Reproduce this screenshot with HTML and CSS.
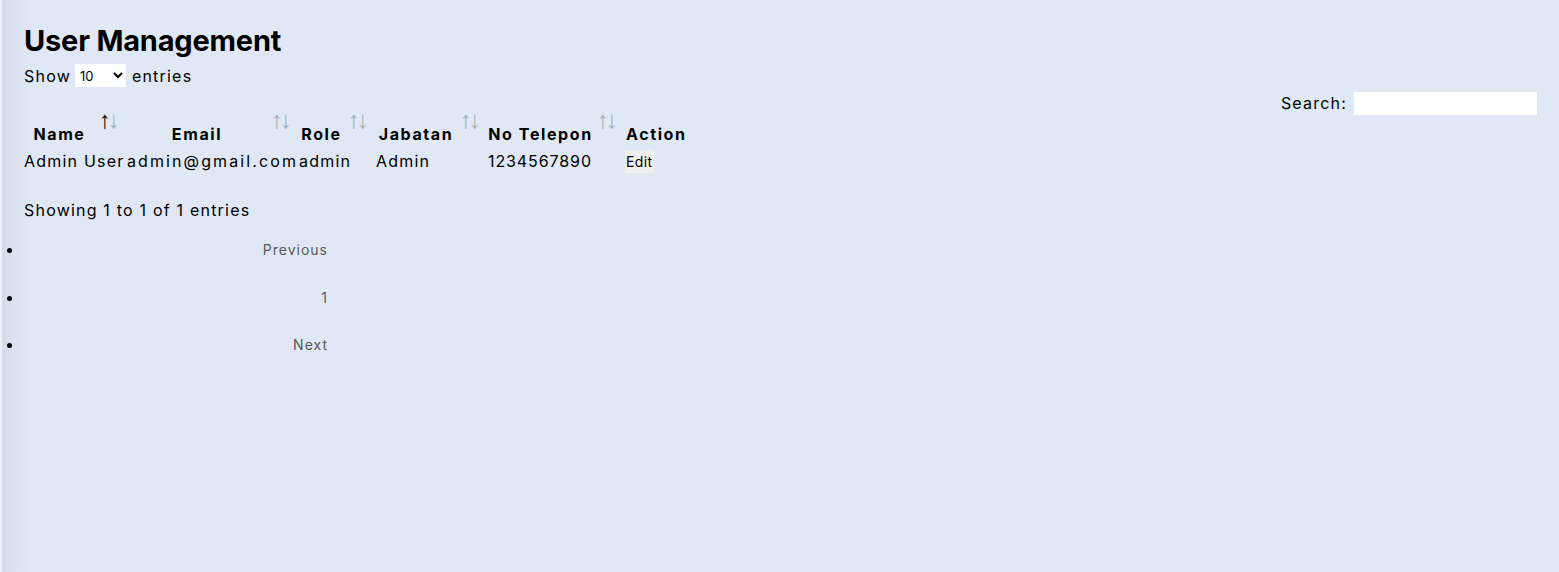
FILE: index.html
```html
<!DOCTYPE html>
<html lang="id">
<head>
<meta charset="utf-8">
<title>User Management</title>
<link rel="stylesheet" href="styles.css">
</head>
<body>
<main class="page">
  <h1 class="title">User Management</h1>
  <div class="length-row">
    <label class="length">Show
      <select class="length-select"><option>10</option><option>25</option><option>50</option><option>100</option></select>
      entries</label>
  </div>
  <div class="filter-row">
    <label class="filter">Search:<input class="search-input" type="search"></label>
  </div>
  <table class="data-table">
    <colgroup>
      <col class="c-name"><col class="c-email"><col class="c-role"><col class="c-jab"><col class="c-tel"><col class="c-act">
    </colgroup>
    <thead>
      <tr>
        <th class="sortable asc">Name</th>
        <th class="sortable">Email</th>
        <th class="sortable">Role</th>
        <th class="sortable">Jabatan</th>
        <th class="sortable">No Telepon</th>
        <th class="plain">Action</th>
      </tr>
    </thead>
    <tbody>
      <tr>
        <td>Admin User</td>
        <td class="cell-email">admin@gmail.com</td>
        <td>admin</td>
        <td>Admin</td>
        <td class="cell-num">1234567890</td>
        <td><a class="edit-btn">Edit</a></td>
      </tr>
    </tbody>
  </table>
  <div class="info">Showing 1 to 1 of 1 entries</div>
  <ul class="pager">
    <li><a class="pager-link">Previous</a></li>
    <li><a class="pager-link">1</a></li>
    <li><a class="pager-link">Next</a></li>
  </ul>
</main>
</body>
</html>
```
FILE: styles.css
```css
html, body {
  margin: 0;
  height: 100%;
}
body {
  background: #eef2f8;
  font-family: "Inter", "Open Sans", sans-serif;
  color: #000;
  font-size: 16px;
  letter-spacing: 1.2px;
}
.page {
  margin-left: 2px;
  min-height: 100%;
  box-sizing: border-box;
  padding: 0 22px 0 22px;
  background: linear-gradient(to right, #d2dbe8 0px, #dae3ef 12px, #dfe8f4 30px, #dfe8f4 100%);
}
.title {
  margin: 0;
  padding-top: 24px;
  font-size: 29px;
  line-height: 34px;
  font-weight: 700;
  height: 39px;
  letter-spacing: -0.2px;
}
.length-row {
  height: 25px;
  display: flex;
  align-items: center;
}
.length {
  display: flex;
  align-items: center;
  gap: 4px;
}
.length-select {
  width: 51px;
  height: 23px;
  border: none;
  background: #fff;
  font-family: inherit;
  font-size: 13px;
  letter-spacing: 0;
  padding: 0 0 0 1px;
  margin: 0 2px 0 0;
  border-radius: 0;
  color: #000;
}
.filter-row {
  display: flex;
  justify-content: flex-end;
  height: 26px;
  align-items: flex-end;
}
.filter {
  display: flex;
  align-items: center;
  gap: 7px;
  line-height: 20px;
}
.search-input {
  width: 183px;
  height: 23px;
  box-sizing: border-box;
  border: none;
  background: #fff;
  padding: 0 4px;
  margin: 0;
  position: relative;
  top: 1px;
}
.data-table {
  border-collapse: collapse;
  table-layout: fixed;
  width: 693px;
}
.c-name { width: 103px; }
.c-email { width: 172px; }
.c-role { width: 77px; }
.c-jab { width: 112px; }
.c-tel { width: 137px; }
.c-act { width: 92px; }
.data-table th {
  position: relative;
  padding: 8px 32px 2px 0;
  line-height: 24px;
  font-weight: 700;
  text-align: center;
  white-space: nowrap;
  letter-spacing: 1.6px;
}
.data-table th.plain {
  text-align: left;
  padding-left: 1px;
}
.sortable::before,
.sortable::after {
  position: absolute;
  top: -6px;
  font-family: "Liberation Sans", "DejaVu Sans", sans-serif;
  font-weight: 400;
  font-size: 24px;
  line-height: 24px;
  letter-spacing: 0;
  color: #a7acb3;
}
.sortable::before {
  content: "\2191";
  right: 16px;
}
.sortable::after {
  content: "\2193";
  right: 7px;
}
.asc::before {
  color: #000;
}
.data-table td {
  padding: 0;
  height: 26px;
  white-space: nowrap;
  overflow: visible;
}
.data-table td.cell-email {
  letter-spacing: 2.1px;
}
.data-table td.cell-num {
  letter-spacing: 0.9px;
}
.edit-btn {
  display: inline-block;
  background: #efefef;
  font-size: 14px;
  line-height: 23px;
  padding: 0 1px;
  color: #000;
  letter-spacing: 0.4px;
}
.info {
  margin-top: 24px;
  line-height: 24px;
}
.pager {
  margin: 17px 0 0;
  padding: 0;
  width: 304px;
  list-style: disc outside;
}
.pager li {
  height: 47.5px;
  line-height: 20px;
  text-align: right;
  margin-left: 0;
}
.pager-link {
  font-size: 14px;
  color: #5a5a5a;
  letter-spacing: 1px;
}
```
